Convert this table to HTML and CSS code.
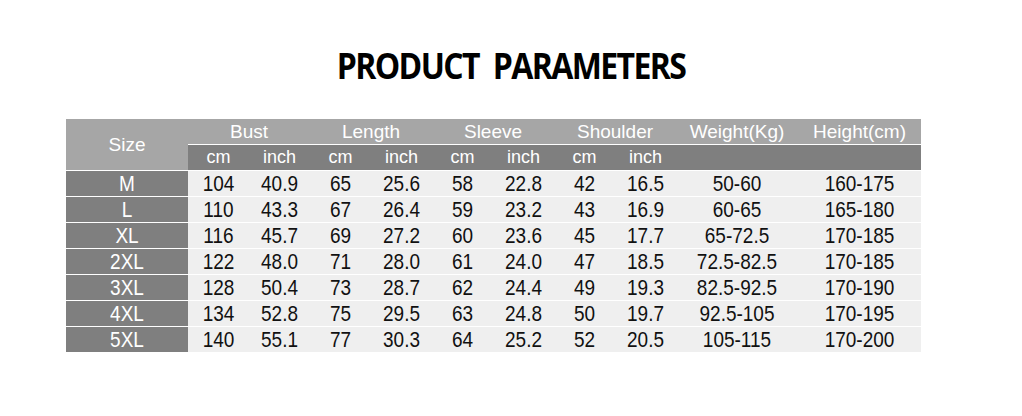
FILE: index.html
```html
<!DOCTYPE html>
<html>
<head>
<meta charset="utf-8">
<link rel="stylesheet" href="styles.css">
</head>
<body>
<div class="page">
  <h1 class="title"><span class="title-text">PRODUCT PARAMETERS</span></h1>
  <table class="size-table">
    <colgroup>
      <col class="c-size">
      <col class="c-sub"><col class="c-sub"><col class="c-sub"><col class="c-sub">
      <col class="c-sub"><col class="c-sub"><col class="c-sub"><col class="c-sub">
      <col class="c-weight">
      <col class="c-height">
    </colgroup>
    <thead>
      <tr class="head-main">
        <th class="size-head" rowspan="2">Size</th>
        <th colspan="2">Bust</th>
        <th colspan="2">Length</th>
        <th colspan="2">Sleeve</th>
        <th colspan="2">Shoulder</th>
        <th>Weight(Kg)</th>
        <th>Height(cm)</th>
      </tr>
      <tr class="head-sub">
        <th>cm</th><th>inch</th>
        <th>cm</th><th>inch</th>
        <th>cm</th><th>inch</th>
        <th>cm</th><th>inch</th>
        <th></th><th></th>
      </tr>
    </thead>
    <tbody>
      <tr><th><span>M</span></th><td><span>104</span></td><td><span>40.9</span></td><td><span>65</span></td><td><span>25.6</span></td><td><span>58</span></td><td><span>22.8</span></td><td><span>42</span></td><td><span>16.5</span></td><td><span>50-60</span></td><td><span>160-175</span></td></tr>
      <tr><th><span>L</span></th><td><span>110</span></td><td><span>43.3</span></td><td><span>67</span></td><td><span>26.4</span></td><td><span>59</span></td><td><span>23.2</span></td><td><span>43</span></td><td><span>16.9</span></td><td><span>60-65</span></td><td><span>165-180</span></td></tr>
      <tr><th><span>XL</span></th><td><span>116</span></td><td><span>45.7</span></td><td><span>69</span></td><td><span>27.2</span></td><td><span>60</span></td><td><span>23.6</span></td><td><span>45</span></td><td><span>17.7</span></td><td><span>65-72.5</span></td><td><span>170-185</span></td></tr>
      <tr><th><span>2XL</span></th><td><span>122</span></td><td><span>48.0</span></td><td><span>71</span></td><td><span>28.0</span></td><td><span>61</span></td><td><span>24.0</span></td><td><span>47</span></td><td><span>18.5</span></td><td><span>72.5-82.5</span></td><td><span>170-185</span></td></tr>
      <tr><th><span>3XL</span></th><td><span>128</span></td><td><span>50.4</span></td><td><span>73</span></td><td><span>28.7</span></td><td><span>62</span></td><td><span>24.4</span></td><td><span>49</span></td><td><span>19.3</span></td><td><span>82.5-92.5</span></td><td><span>170-190</span></td></tr>
      <tr><th><span>4XL</span></th><td><span>134</span></td><td><span>52.8</span></td><td><span>75</span></td><td><span>29.5</span></td><td><span>63</span></td><td><span>24.8</span></td><td><span>50</span></td><td><span>19.7</span></td><td><span>92.5-105</span></td><td><span>170-195</span></td></tr>
      <tr><th><span>5XL</span></th><td><span>140</span></td><td><span>55.1</span></td><td><span>77</span></td><td><span>30.3</span></td><td><span>64</span></td><td><span>25.2</span></td><td><span>52</span></td><td><span>20.5</span></td><td><span>105-115</span></td><td><span>170-200</span></td></tr>
    </tbody>
  </table>
</div>
</body>
</html>
```
FILE: styles.css
```css
html, body {
  margin: 0;
  padding: 0;
  background: #ffffff;
}

.page {
  width: 1022px;
  height: 416px;
  display: flex;
  flex-direction: column;
}

.title {
  margin: 46px 0 0 0;
  height: 40px;
  line-height: 40px;
  text-align: center;
  font-family: "Open Sans", "Noto Sans", sans-serif;
  font-weight: 700;
  font-size: 32px;
  letter-spacing: -1.6px;
  word-spacing: 7px;
  color: #000000;
}

.title-text {
  display: inline-block;
  transform: scaleY(1.1);
}

.size-table {
  margin: 33px 0 0 66px;
  width: 855px;
  table-layout: fixed;
  border-collapse: collapse;
  border-spacing: 0;
  font-family: "Liberation Sans", Arial, sans-serif;
  font-size: 19px;
}

.c-size { width: 122px; }
.c-sub { width: 61px; }
.c-weight { width: 122px; }
.c-height { width: 123px; }

.size-table th,
.size-table td {
  padding: 0;
  height: 25px;
  line-height: 25px;
  text-align: center;
  font-weight: 400;
  border-bottom: 1px solid #ffffff;
  white-space: nowrap;
}

.head-main th {
  background: #a6a6a6;
  color: #ffffff;
}

.head-sub th {
  background: #7f7f7f;
  color: #ffffff;
  font-size: 18px;
}

.size-table .size-head {
  background: #a6a6a6;
  color: #ffffff;
}

.size-table tbody th {
  background: #7f7f7f;
  color: #ffffff;
}

.size-table tbody td {
  background: #efefef;
  color: #111111;
}

.size-table tbody span {
  display: inline-block;
  transform: scaleY(1.14);
}

.size-table tbody tr:last-child th,
.size-table tbody tr:last-child td {
  border-bottom: none;
}
```
